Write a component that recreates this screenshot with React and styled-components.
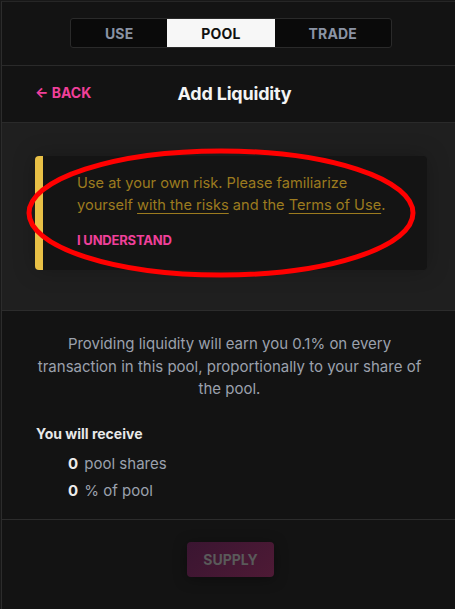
import React from "react";
import styled, { createGlobalStyle } from "styled-components";

const GlobalStyle = createGlobalStyle`
  html, body {
    margin: 0;
    padding: 0;
    background: #161616;
    font-family: "Inter", "Noto Sans", sans-serif;
  }
  #root {
    min-height: 609px;
  }
`;

const App = () => {
  const tabs = ["Use", "Pool", "Trade"];

  return (
    <Page>
      <GlobalStyle />
      <Panel>
        <NavBar>
          <Tabs>
            {tabs.map((t) => (
              <Tab key={t} active={t === "Pool"}>
                {t}
              </Tab>
            ))}
          </Tabs>
        </NavBar>

        <Header>
          <BackLink>← Back</BackLink>
          <Title>Add Liquidity</Title>
        </Header>

        <WarningSection>
          <WarningCard>
            <WarningText>
              Use at your own risk. Please familiarize yourself{" "}
              <Link>with the risks</Link> and the <Link>Terms of Use</Link>.
            </WarningText>
            <Understand>I understand</Understand>
          </WarningCard>
          <Annotation viewBox="0 0 455 140" width="455" height="140">
            <ellipse
              cx="220"
              cy="68"
              rx="192"
              ry="62"
              fill="none"
              stroke="#ff0000"
              strokeWidth="5"
            />
          </Annotation>
        </WarningSection>

        <InfoSection>
          <Description>
            Providing liquidity will earn you 0.1% on every transaction in this
            pool, proportionally to your share of the pool.
          </Description>
          <ReceiveTitle>You will receive</ReceiveTitle>
          <ReceiveList>
            <ReceiveRow>
              <strong>0</strong> pool shares
            </ReceiveRow>
            <ReceiveRow>
              <strong>0</strong> % of pool
            </ReceiveRow>
          </ReceiveList>
        </InfoSection>

        <Footer>
          <SupplyButton disabled>Supply</SupplyButton>
        </Footer>
      </Panel>
    </Page>
  );
};

const Page = styled.div`
  padding: 1px 0 0 1px;
  min-height: 608px;
  background: #181818;
`;

const Panel = styled.div`
  border-left: 1px solid #2c2c2c;
  border-top: 1px solid #262626;
  background: #131313;
  min-height: 607px;
  display: flex;
  flex-direction: column;
`;

const NavBar = styled.div`
  display: flex;
  justify-content: center;
  padding: 16px 0 17px 0;
  height: 30px;
  border-bottom: 1px solid #2a2a2a;
`;

const Tabs = styled.div`
  display: flex;
  width: 320px;
  margin-left: 5px;
  background: #0a0a0a;
  border: 1px solid #2a2a2a;
  border-radius: 3px;
  overflow: hidden;
`;

const Tab = styled.div`
  flex: 1 1 auto;
  display: flex;
  align-items: center;
  justify-content: center;
  font-size: 14px;
  font-weight: 700;
  text-transform: uppercase;
  letter-spacing: 0.2px;
  background: ${(p) => (p.active ? "#f7f7f7" : "transparent")};
  color: ${(p) => (p.active ? "#111111" : "#8a93a4")};
`;

const Header = styled.div`
  position: relative;
  display: flex;
  align-items: center;
  justify-content: center;
  height: 56px;
  border-bottom: 1px solid #2a2a2a;
`;

const BackLink = styled.span`
  position: absolute;
  left: 33px;
  top: 18px;
  font-size: 14px;
  font-weight: 700;
  color: #f0409a;
  text-transform: uppercase;
`;

const Title = styled.h1`
  margin: -2px 0 0 12px;
  font-size: 18px;
  font-weight: 700;
  color: #f4f4f4;
  letter-spacing: -0.2px;
`;

const WarningSection = styled.div`
  position: relative;
  background: #1f1f1f;
  padding: 33px 28px 40px 33px;
  border-bottom: 1px solid #2c2c2c;
`;

const WarningCard = styled.div`
  background: #141414;
  border-left: 8px solid #e8c046;
  border-radius: 4px;
  padding: 16px 20px 22px 34px;
  box-shadow: 0 0 22px rgba(0, 0, 0, 0.25);
`;

const WarningText = styled.p`
  margin: 0;
  font-size: 14.6px;
  line-height: 22px;
  color: #9c7b1f;
`;

const Link = styled.span`
  text-decoration: underline;
  text-decoration-thickness: 1px;
  text-underline-offset: 3px;
`;

const Understand = styled.div`
  margin-top: 16px;
  font-size: 13px;
  line-height: 16px;
  font-weight: 700;
  color: #f0409a;
  text-transform: uppercase;
  letter-spacing: -0.2px;
`;

const Annotation = styled.svg`
  position: absolute;
  left: -1px;
  top: 22px;
  pointer-events: none;
`;

const InfoSection = styled.div`
  padding: 22px 34px 18px 34px;
  border-bottom: 1px solid #2c2c2c;
`;

const Description = styled.p`
  margin: 0 -2px 0 0;
  text-align: center;
  font-size: 15px;
  line-height: 22.5px;
  color: #9ba1ad;
`;

const ReceiveTitle = styled.div`
  margin-top: 24px;
  font-size: 14px;
  line-height: 17px;
  font-weight: 700;
  color: #e8e8e8;
`;

const ReceiveList = styled.div`
  display: flex;
  flex-direction: column;
  gap: 7px;
  margin-top: 12px;
  padding-left: 32px;
`;

const ReceiveRow = styled.div`
  font-size: 15px;
  line-height: 20px;
  color: #9ba1ad;

  strong {
    color: #ececec;
    font-weight: 700;
    margin-right: 2px;
  }
`;

const Footer = styled.div`
  flex: 1;
  display: flex;
  justify-content: center;
  padding-top: 22px;
`;

const SupplyButton = styled.button`
  width: 87px;
  height: 35px;
  margin-left: 4px;
  border: none;
  border-radius: 4px;
  background: linear-gradient(135deg, #3a1531 0%, #4e1a35 100%);
  color: #5a5a5a;
  font-family: "Inter", "Noto Sans", sans-serif;
  font-size: 14px;
  font-weight: 700;
  text-transform: uppercase;
  box-shadow: 0 2px 14px rgba(0, 0, 0, 0.35);
`;

export default App;
